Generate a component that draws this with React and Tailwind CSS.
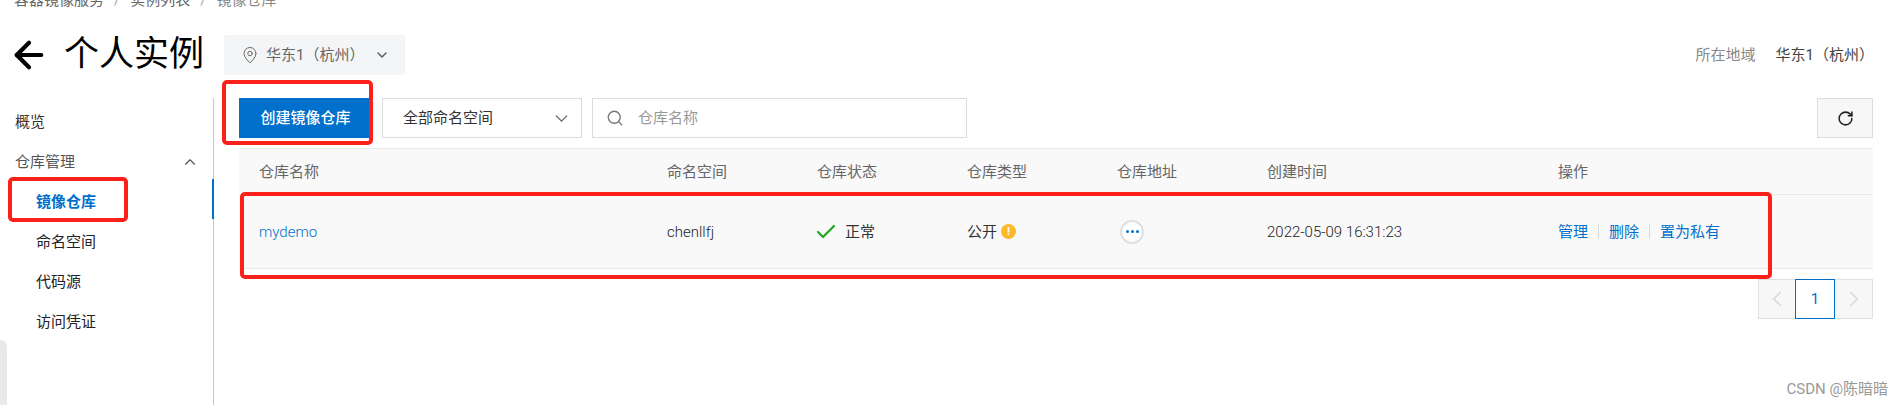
import React from "react";
import { ArrowLeft, ChevronDown, ChevronUp, ChevronLeft, ChevronRight, MapPin, Search, RotateCw, Check } from "lucide-react";

const font = "font-['Roboto','Noto_Sans_CJK_SC',sans-serif]";
const cols = "grid grid-cols-[408px_150px_150px_150px_150px_291px_1fr]";

function NavItem({ children, active, sub }) {
  return (
    <div className={`flex h-10 items-center ${sub ? "pl-[36px]" : "pl-[15px]"} ${active ? "font-bold text-[#0070cc]" : sub ? "text-[#222]" : ""}`}>
      {children}
    </div>
  );
}

export default function App() {
  return (
    <div className={`${font} relative h-[405px] w-[1904px] overflow-hidden bg-white text-[15px] leading-5 text-[#333]`}>
      <div className="-mt-[10px] flex h-5 items-center pl-[14px] text-[#666]">
        <span>容器镜像服务</span>
        <span className="mx-[10px] text-[#aaa]">/</span>
        <span>实例列表</span>
        <span className="mx-[10px] text-[#aaa]">/</span>
        <span className="text-[#888]">镜像仓库</span>
      </div>

      <div className="mt-[25px] flex h-10 items-center pl-[14px] pr-[39px]">
        <ArrowLeft size={42} strokeWidth={2.4} className="-ml-[6px] shrink-0 text-black" />
        <h1 className="ml-[14px] text-[35px] leading-10 font-normal text-black">个人实例</h1>
        <button className="ml-[20px] flex h-10 w-[181px] items-center rounded-[2px] bg-[#f4f5f6] pl-[17px] text-[#666]">
          <MapPin size={18} strokeWidth={1.3} className="text-[#666]" />
          <span className="ml-[7px]">华东1（杭州）</span>
          <ChevronDown size={16} className="ml-[10px] text-[#555]" />
        </button>
        <div className="-mr-[9px] ml-auto flex items-center">
          <span className="text-[#888]">所在地域</span>
          <span className="ml-5 text-[#444]">华东1（杭州）</span>
        </div>
      </div>

      <div className="mt-[23px] flex h-[307px]">
        <aside className="relative h-full w-[214px] shrink-0 border-r border-[#c8c8c8] pt-1">
          <NavItem>概览</NavItem>
          <div className="flex h-10 items-center justify-between pl-[15px] pr-[14px] text-[#555]">
            <span>仓库管理</span>
            <ChevronUp size={18} strokeWidth={1.5} />
          </div>
          <NavItem sub active>镜像仓库</NavItem>
          <NavItem sub>命名空间</NavItem>
          <NavItem sub>代码源</NavItem>
          <NavItem sub>访问凭证</NavItem>
          <div className="absolute -right-px top-[81px] h-10 w-[2px] bg-[#0070cc]" />
        </aside>

        <main className="ml-[25px] w-[1634px]">
          <div className="flex h-10 items-stretch">
            <button className="w-[133px] bg-[#0070cc] font-medium text-white">创建镜像仓库</button>
            <div className="ml-[10px] flex w-[200px] items-center justify-between border border-[#dcdcdc] pl-5 pr-[9px]">
              <span>全部命名空间</span>
              <ChevronDown size={21} strokeWidth={1.6} className="text-[#666]" />
            </div>
            <div className="ml-[10px] flex w-[375px] items-center border border-[#dcdcdc] pl-[13px] text-[#999]">
              <Search size={18} strokeWidth={1.8} className="text-[#777]" />
              <span className="ml-[14px]">仓库名称</span>
            </div>
            <button className="ml-auto flex w-[56px] items-center justify-center border border-[#dcdcdc] bg-[#f7f7f7] text-[#222]">
              <RotateCw size={17} strokeWidth={2.2} />
            </button>
          </div>

          <div className={`${cols} mt-[10px] h-[47px] items-center border-y border-[#e8e8e8] bg-[#f9f9f9] text-[#666] [&>*]:pl-5`}>
            <span>仓库名称</span>
            <span>命名空间</span>
            <span>仓库状态</span>
            <span>仓库类型</span>
            <span>仓库地址</span>
            <span>创建时间</span>
            <span>操作</span>
          </div>

          <div className={`${cols} h-[74px] items-center border-b border-[#e8e8e8] bg-[#f9f9f9] [&>*]:pl-5`}>
            <span className="font-light text-[#0070cc]">mydemo</span>
            <span className="font-light text-[#222]">chenllfj</span>
            <span className="flex items-center text-[#333]">
              <Check size={24} strokeWidth={2.2} className="-ml-[3px] text-[#1fa81f]" />
              <span className="ml-[7px]">正常</span>
            </span>
            <span className="flex items-center">
              公开
              <span className="ml-1 flex h-[15px] w-[15px] items-center justify-center rounded-full bg-[#fcb92c] text-[11px] leading-none font-bold text-white">!</span>
            </span>
            <span>
              <span className="ml-[3px] flex h-6 w-6 items-center justify-center gap-[2px] rounded-full border-2 border-[#e0e0e0] bg-white">
                <i className="h-[3px] w-[3px] rounded-full bg-[#0070cc]" />
                <i className="h-[3px] w-[3px] rounded-full bg-[#0070cc]" />
                <i className="h-[3px] w-[3px] rounded-full bg-[#0070cc]" />
              </span>
            </span>
            <span className="font-light text-[#222]">2022-05-09 16:31:23</span>
            <span className="flex items-center text-[#0070cc]">
              管理
              <i className="mx-[10px] h-[15px] w-px bg-[#d8d8d8]" />
              删除
              <i className="mx-[10px] h-[15px] w-px bg-[#d8d8d8]" />
              置为私有
            </span>
          </div>

          <div className="mt-[10px] flex justify-end">
            <div className="flex h-10 w-[115px] border border-[#e0e0e0] bg-[#f7f7f7]">
              <span className="flex w-[36px] items-center justify-center text-[#d8d8d8]">
                <ChevronLeft size={26} strokeWidth={1.6} />
              </span>
              <span className="-my-px flex w-10 items-center justify-center border border-[#0070cc] bg-white text-[#0070cc]">1</span>
              <span className="flex flex-1 items-center justify-center text-[#d8d8d8]">
                <ChevronRight size={26} strokeWidth={1.6} />
              </span>
            </div>
          </div>
        </main>
      </div>

      <div className="absolute bottom-0 left-0 h-[65px] w-[7px] rounded-tr-[6px] bg-[#e9e9e9]" />
      <div className="absolute bottom-[6px] right-[16px] text-[15px] text-[#999]">CSDN @陈暗暗</div>

      <div className="absolute left-[222px] top-[80px] h-[65px] w-[151px] rounded-[5px] border-4 border-[#fb2019]" />
      <div className="absolute left-[8px] top-[177px] h-[45px] w-[120px] rounded-[5px] border-4 border-[#fb2019]" />
      <div className="absolute left-[240px] top-[192px] h-[87px] w-[1532px] rounded-[5px] border-4 border-[#fb2019]" />
    </div>
  );
}
